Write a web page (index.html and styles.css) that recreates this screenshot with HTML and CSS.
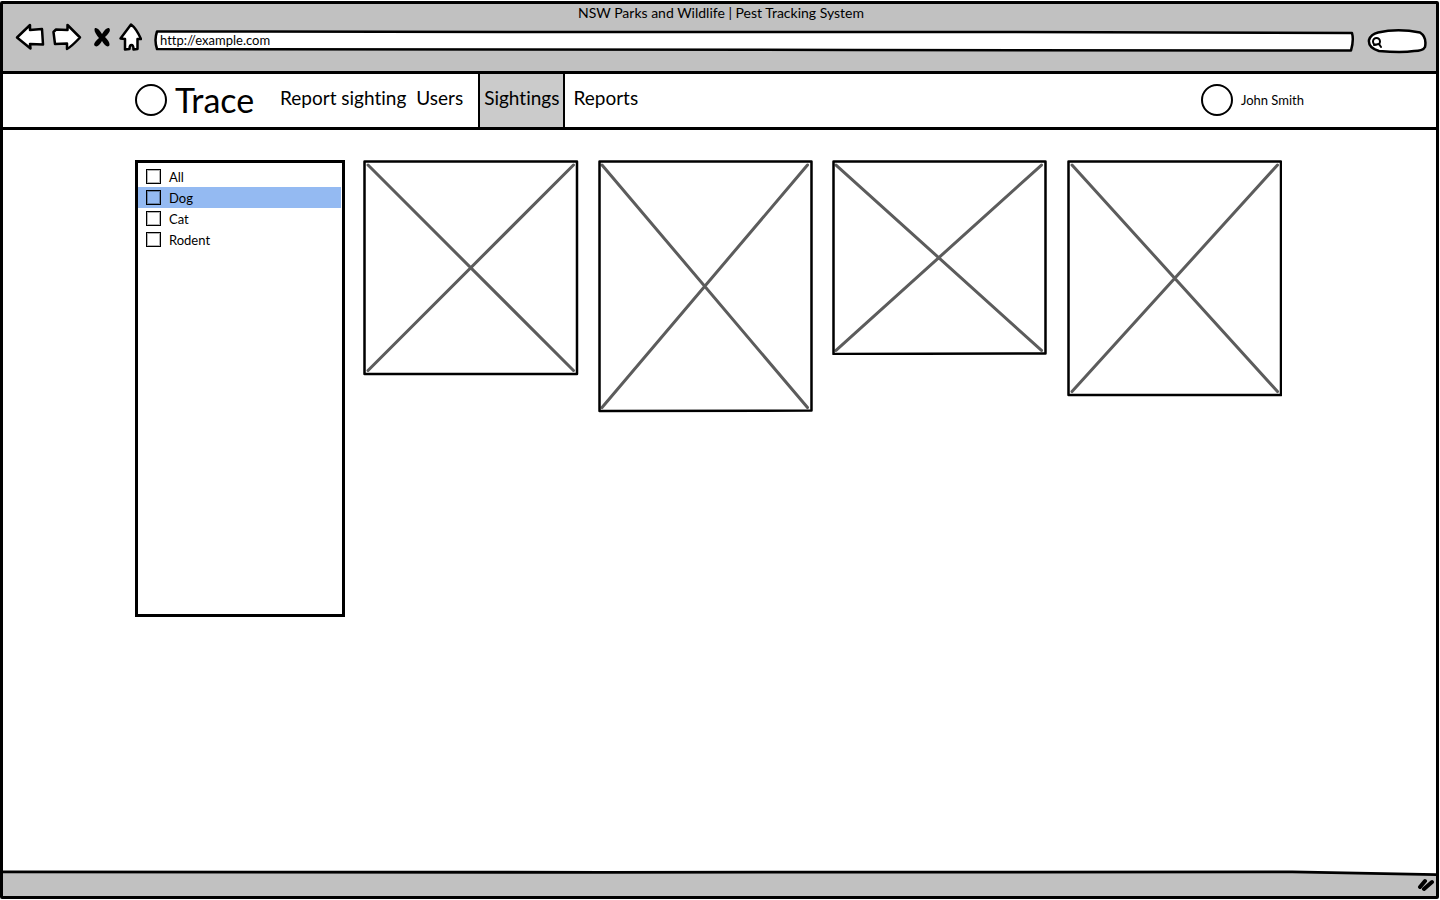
FILE: index.html
```html
<!DOCTYPE html>
<html lang="en">
<head>
<meta charset="utf-8">
<meta name="viewport" content="width=device-width, initial-scale=1">
<title>NSW Parks and Wildlife | Pest Tracking System</title>
<link rel="stylesheet" href="styles.css">
</head>
<body>
<div class="window">
  <header class="toolbar">
    <div class="window-title">NSW Parks and Wildlife | Pest Tracking System</div>
    <div class="controls">
      <div class="buttons">
        <button class="icon-button" type="button" aria-label="Back">
          <svg width="30" height="30" viewBox="0 0 30 30"><path d="M2 14.500L15 2L15 7L27 6L28 21.500L15 21L15.500 25.500Z"/></svg>
        </button>
        <button class="icon-button" type="button" aria-label="Forward">
          <svg width="30" height="30" viewBox="0 0 30 30"><path d="M28 14.500L15.500 2L15.500 7L4 6.500L1.500 9L3 21L15 20.500L15 26Q19 24 28 14.500Z"/></svg>
        </button>
        <button class="icon-button stop" type="button" aria-label="Stop">
          <svg width="18" height="22" viewBox="0 0 18 22"><path class="solid" d="M2 1Q5 0 9 7Q13 0 16 1Q19 4 12 10Q18 16 16 19Q13 21 9 14Q5 21 2 19Q-1 17 6 11Q0 4 2 1Z"/></svg>
        </button>
        <button class="icon-button" type="button" aria-label="Home">
          <svg width="24" height="30" viewBox="0 0 24 30"><path d="M13 1.500Q18 5 23 16L19.500 16L19.500 26L15.500 26.500Q15.500 22 13.500 22Q11.500 22 11.500 26L7 26.500L7 16L2.500 15.500Z"/></svg>
        </button>
      </div>
      <div class="address">
        <svg class="address-shape" viewBox="0 0 1200 22" preserveAspectRatio="none" aria-hidden="true"><path d="M3 1.500L400 2L850 2L1197 3Q1199 10 1196 20.500L700 20L3 19Q0 10 3 1.500Z"/></svg>
        <input class="address-input" type="text" value="http://example.com" aria-label="Address">
      </div>
      <div class="search">
        <svg class="search-shape" width="60" height="26" viewBox="0 0 60 26" aria-hidden="true"><path d="M11 4.500Q31 0 53 4.500Q60 9 58 19Q56 23 47 23Q35 25 12 23Q1 20 2 12Q4 6 11 4.500Z"/><g class="lens"><circle cx="9.500" cy="13.500" r="3.500"/><path d="M7 17L12 16L14 19"/></g></svg>
        <input class="search-input" type="search" aria-label="Search">
      </div>
    </div>
  </header>

  <div class="site-header">
    <div class="brand">
      <span class="disc"></span>
      <span class="brand-name">Trace</span>
    </div>
    <nav class="menu">
      <a class="menu-link" href="#report">Report sighting</a>
      <a class="menu-link" href="#users">Users</a>
      <a class="menu-link current" href="#sightings" aria-current="page">Sightings</a>
      <a class="menu-link" href="#reports">Reports</a>
    </nav>
    <div class="user">
      <span class="disc"></span>
      <span>John Smith</span>
    </div>
  </div>

  <main class="content">
    <aside class="filters">
      <label class="filter"><input class="tick" type="checkbox">All</label>
      <label class="filter selected"><input class="tick" type="checkbox">Dog</label>
      <label class="filter"><input class="tick" type="checkbox">Cat</label>
      <label class="filter"><input class="tick" type="checkbox">Rodent</label>
    </aside>
    <section class="gallery" aria-label="Sightings">
      <svg class="photo" viewBox="0 0 215 215"><path class="cross" d="M5 5L210 210M210 5L5 210"/><path class="frame" d="M1.500 1.500L213.500 1.500L213.500 213.500L1.500 213.500Z"/></svg>
      <svg class="photo" viewBox="0 0 215 252"><path class="cross" d="M4 5L209 247M209 5L4 247"/><path class="frame" d="M1.500 1.500L213 1.500L213 250L1.500 250.500Z"/></svg>
      <svg class="photo" viewBox="0 0 215 195"><path class="cross" d="M4 5L209 190M209 5L4 190"/><path class="frame" d="M1.500 1.500L213 1.500L213 193L1.500 193.500Z"/></svg>
      <svg class="photo" viewBox="0 0 215 236"><path class="cross" d="M5 5L210 231M210 5L5 231"/><path class="frame" d="M1.500 1.500L213.500 1.500L213.500 234.500L1.500 234.500Z"/></svg>
    </section>
  </main>

  <footer class="statusbar">
    <svg class="status-shape" viewBox="0 0 1434 28" preserveAspectRatio="none" aria-hidden="true"><path d="M-4 2L600 2.500L1290 2L1438 5V32H-4Z"/></svg>
    <svg class="grip" width="18" height="16" viewBox="0 0 18 16" aria-hidden="true"><path d="M4 10L9 4M8 12L16 5"/></svg>
  </footer>
</div>
</body>
</html>
```
FILE: styles.css
```css
* {
  box-sizing: border-box;
}

body {
  margin: 0;
  padding: 1px 1px 1px 0;
  background: #fff;
  color: #000;
  font-family: Lato, "Open Sans", sans-serif;
  font-size: 13px;
  font-variant-ligatures: none;
  line-height: 16px;
}

svg {
  display: block;
  fill: #fff;
  stroke: #000;
  stroke-width: 2.5;
  stroke-linejoin: round;
  stroke-linecap: round;
}

.window {
  display: flex;
  flex-direction: column;
  min-height: calc(100vh - 2px);
  border: 3px solid #000;
  border-radius: 2px;
}

.toolbar {
  padding: 1px 9px 17px 12px;
  border-bottom: 3px solid #000;
  background: #c1c1c1;
}

.window-title {
  text-align: center;
  font-size: 14px;
}

.controls {
  display: flex;
  align-items: center;
  gap: 12px;
}

.buttons {
  display: flex;
  align-items: center;
  gap: 7px;
  height: 32px;
}

.icon-button {
  padding: 0;
  border: 0;
  background: none;
}

.stop {
  margin-left: 4px;
}

.solid {
  fill: #000;
  stroke: none;
}

.address {
  position: relative;
  flex: 1;
  height: 22px;
  margin-top: 7px;
}

.address-shape {
  position: absolute;
  inset: 0;
  width: 100%;
  height: 100%;
}

.address-input {
  position: relative;
  width: 100%;
  height: 20px;
  padding: 0 6px;
  border: 0;
  background: none;
  color: inherit;
  font: inherit;
  font-variant-ligatures: none;
}

.search {
  position: relative;
  width: 60px;
  height: 26px;
  margin-top: 7px;
}

.search-shape {
  position: absolute;
  inset: 0;
}

.lens {
  stroke-width: 2;
}

.search-input {
  position: relative;
  width: 100%;
  height: 100%;
  padding: 0 8px 0 18px;
  border: 0;
  background: none;
  font: inherit;
}

.site-header {
  display: flex;
  align-items: center;
  height: 56px;
  padding: 0 132px;
  border-bottom: 3px solid #000;
}

.brand {
  display: flex;
  align-items: center;
  gap: 8px;
  width: 137px;
  padding-bottom: 2px;
}

.brand-name {
  font-size: 34px;
  line-height: 36px;
}

.disc {
  width: 32px;
  height: 32px;
  border: 2px solid #000;
  border-radius: 50%;
}

.menu {
  display: flex;
  align-self: stretch;
}

.menu-link {
  display: flex;
  align-items: center;
  padding: 0 2px 6px 8px;
  color: inherit;
  font-size: 19px;
  text-decoration: none;
}

.current {
  margin-left: 13px;
  padding: 0 4px 6px;
  border: solid #000;
  border-width: 0 2px;
  background: #cbcbcb;
}

.user {
  display: flex;
  align-items: center;
  gap: 8px;
  margin-left: auto;
  padding-bottom: 2px;
}

.content {
  display: grid;
  flex: 1;
  grid-template-columns: 210px 1fr;
  align-items: start;
  gap: 18px;
  padding: 30px 154px 30px 132px;
}

.filters {
  min-height: 457px;
  padding: 3px 1px 3px 0;
  border: 3px solid #000;
}

.filter {
  display: flex;
  align-items: center;
  gap: 8px;
  height: 21px;
  padding-left: 8px;
}

.selected {
  background: #94baf2;
}

.tick {
  width: 15px;
  height: 15px;
  margin: 0;
  appearance: none;
  border: 1px solid #000;
  box-shadow: inset 0 0 0 1px rgba(0, 0, 0, 0.3);
}

.tick:checked {
  background: #000;
}

.gallery {
  display: grid;
  grid-template-columns: repeat(4, 1fr);
  align-items: start;
  gap: 19px;
}

.photo {
  width: 100%;
}

.frame {
  fill: none;
}

.cross {
  stroke: #5c5c5c;
  stroke-width: 3;
}

.statusbar {
  position: relative;
  display: flex;
  align-items: center;
  justify-content: flex-end;
  height: 26px;
  padding: 4px 2px 0;
  overflow: hidden;
}

.status-shape {
  position: absolute;
  inset: 0;
  width: 100%;
  height: 100%;
  fill: #c1c1c1;
  stroke-width: 3;
}

.grip {
  position: relative;
  stroke-width: 4;
}
```
